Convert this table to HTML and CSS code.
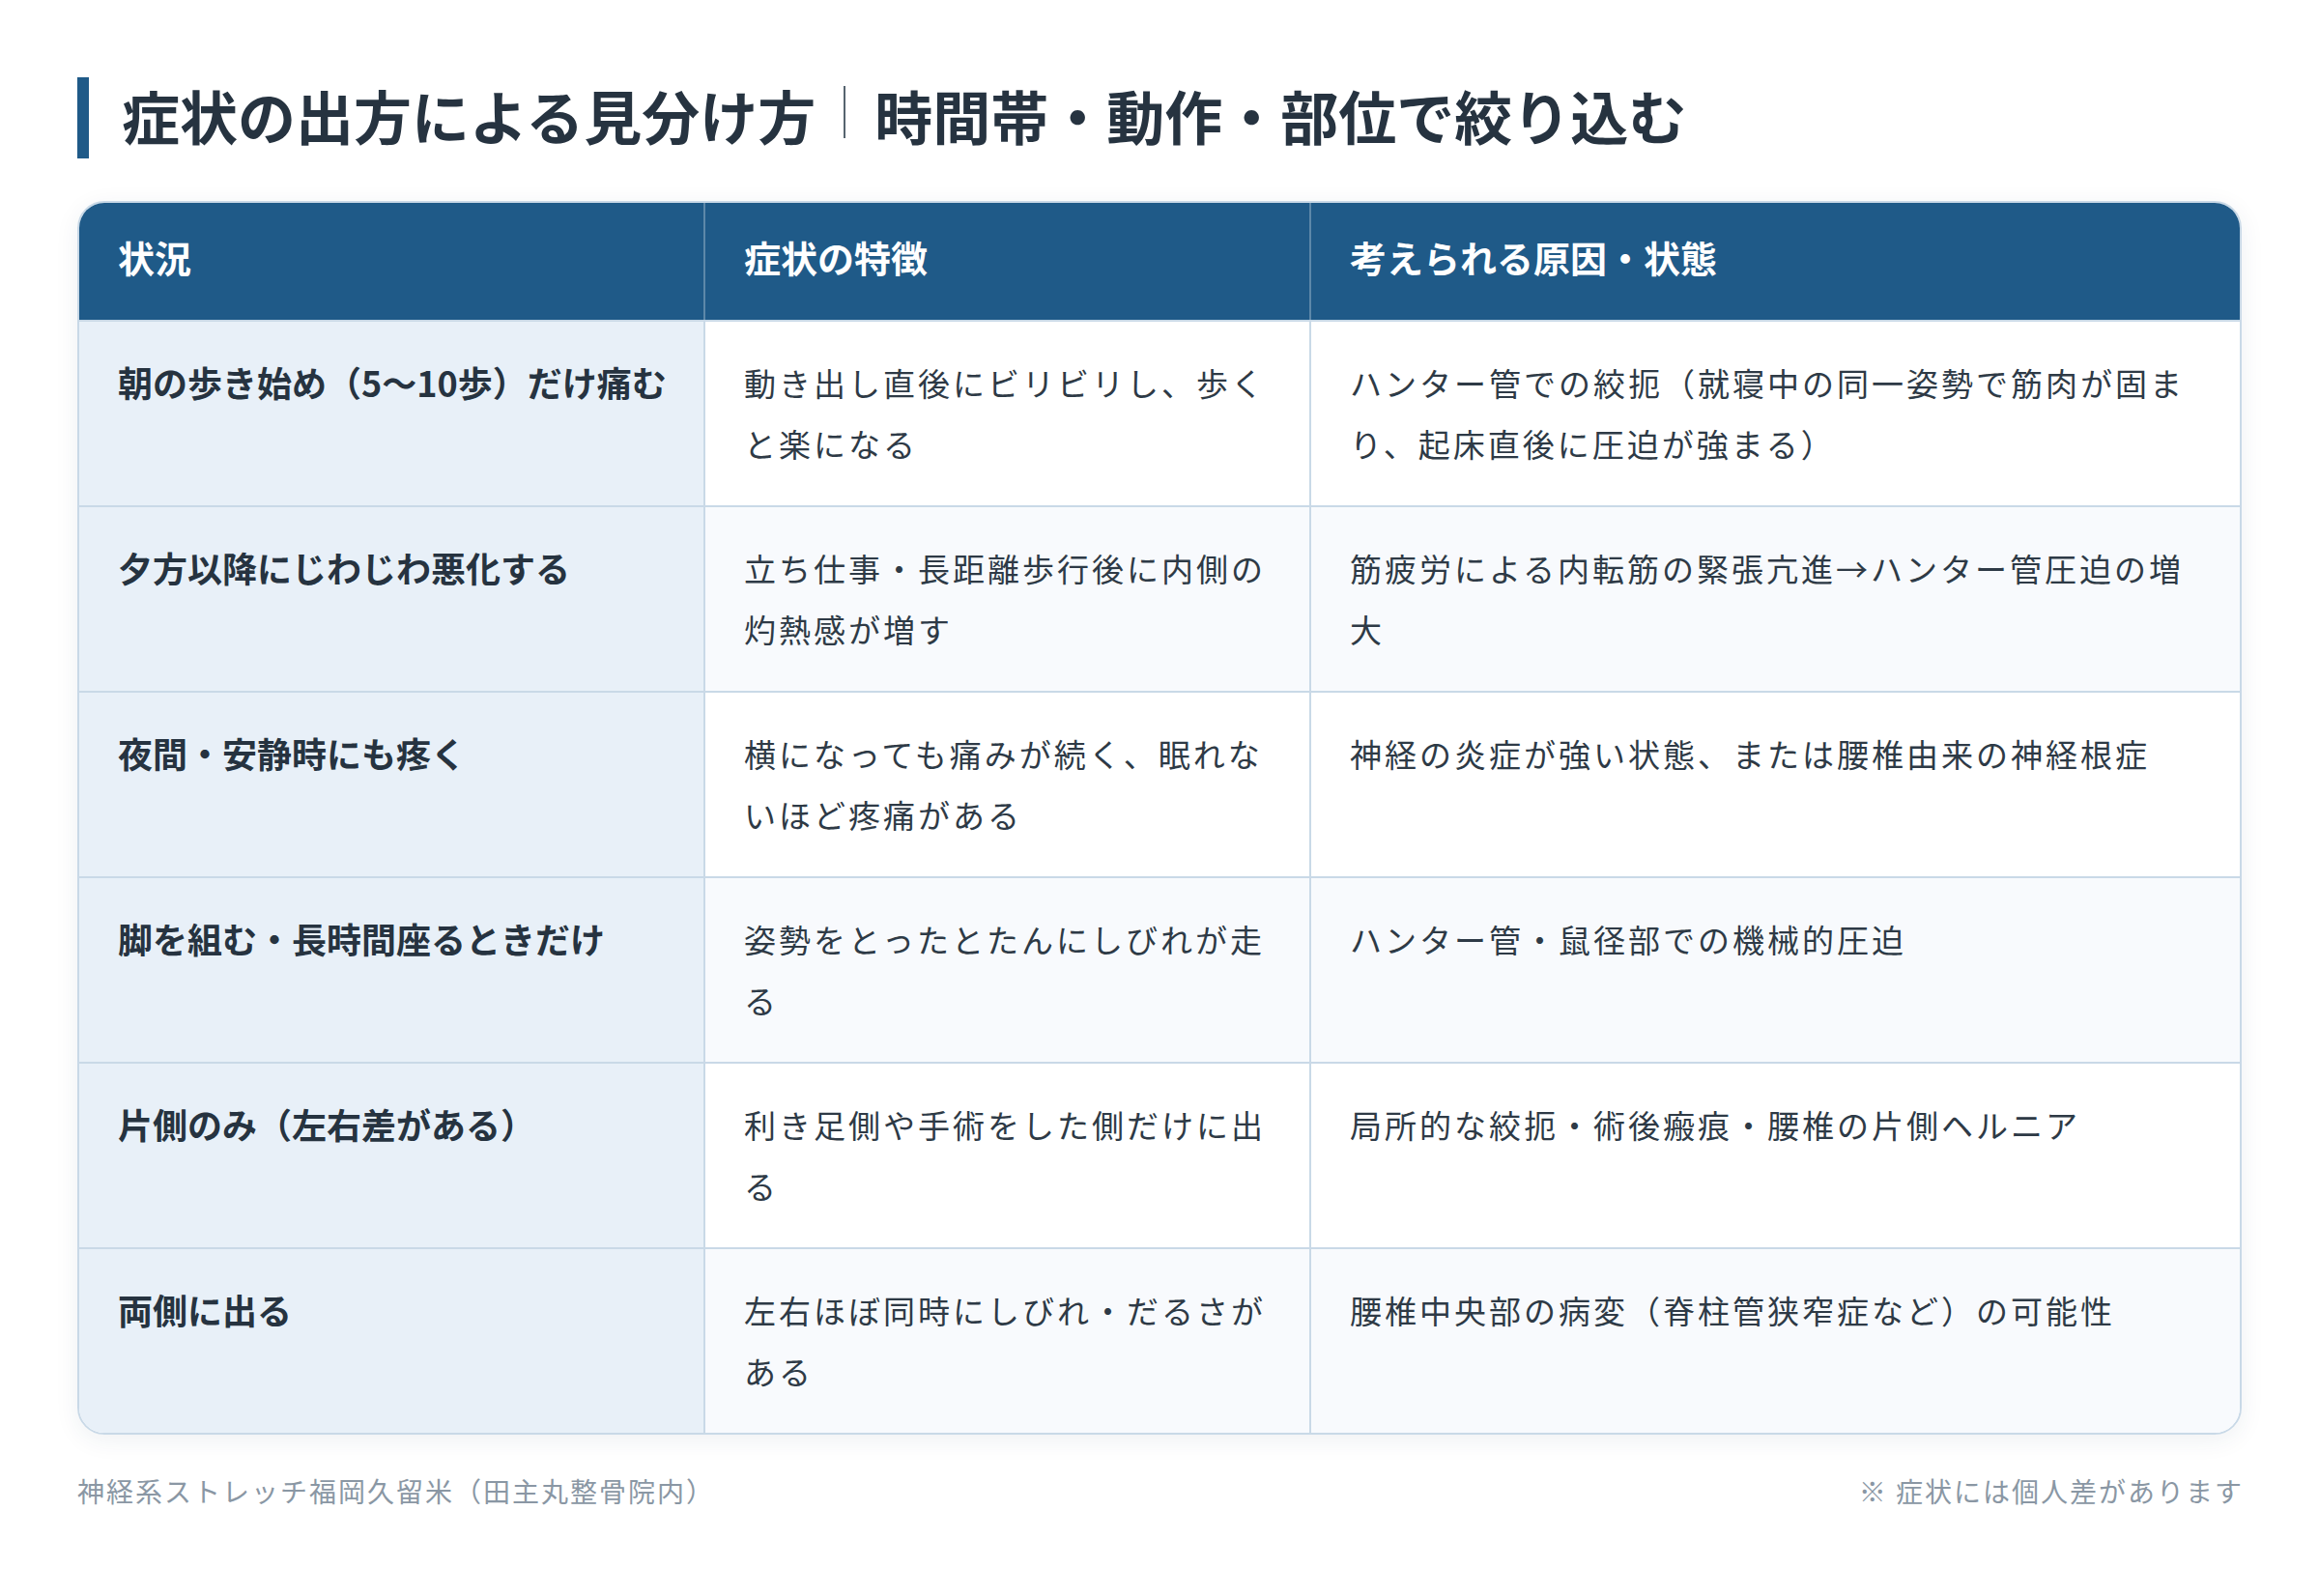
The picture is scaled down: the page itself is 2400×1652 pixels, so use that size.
FILE: index.html
```html
<!DOCTYPE html>
<html lang="ja">
<head>
<meta charset="utf-8">
<title>症状の出方による見分け方</title>
<link rel="stylesheet" href="styles.css">
</head>
<body>
<main class="page">
  <h1 class="title">症状の出方による見分け方<span class="sep"></span>時間帯・動作・部位で絞り込む</h1>
  <div class="card">
    <table class="grid">
      <colgroup>
        <col class="c1">
        <col class="c2">
        <col class="c3">
      </colgroup>
      <thead>
        <tr>
          <th>状況</th>
          <th>症状の特徴</th>
          <th>考えられる原因・状態</th>
        </tr>
      </thead>
      <tbody>
        <tr>
          <td class="sit">朝の歩き始め（5〜10歩）だけ痛む</td>
          <td>動き出し直後にビリビリし、歩くと楽になる</td>
          <td>ハンター管での絞扼（就寝中の同一姿勢で筋肉が固まり、起床直後に圧迫が強まる）</td>
        </tr>
        <tr>
          <td class="sit">夕方以降にじわじわ悪化する</td>
          <td>立ち仕事・長距離歩行後に内側の灼熱感が増す</td>
          <td>筋疲労による内転筋の緊張亢進→ハンター管圧迫の増大</td>
        </tr>
        <tr>
          <td class="sit">夜間・安静時にも疼く</td>
          <td>横になっても痛みが続く、眠れないほど疼痛がある</td>
          <td>神経の炎症が強い状態、または腰椎由来の神経根症</td>
        </tr>
        <tr>
          <td class="sit">脚を組む・長時間座るときだけ</td>
          <td>姿勢をとったとたんにしびれが走る</td>
          <td>ハンター管・鼠径部での機械的圧迫</td>
        </tr>
        <tr>
          <td class="sit">片側のみ（左右差がある）</td>
          <td>利き足側や手術をした側だけに出る</td>
          <td>局所的な絞扼・術後瘢痕・腰椎の片側ヘルニア</td>
        </tr>
        <tr>
          <td class="sit">両側に出る</td>
          <td>左右ほぼ同時にしびれ・だるさがある</td>
          <td>腰椎中央部の病変（脊柱管狭窄症など）の可能性</td>
        </tr>
      </tbody>
    </table>
  </div>
  <footer class="foot">
    <span>神経系ストレッチ福岡久留米（田主丸整骨院内）</span>
    <span>※ 症状には個人差があります</span>
  </footer>
</main>
</body>
</html>
```

FILE: styles.css
```css
html, body {
  margin: 0;
  padding: 0;
  background: #ffffff;
}

body {
  font-family: "Noto Sans CJK JP", "Noto Sans", sans-serif;
  color: #263340;
}

.page {
  padding: 80px 80px 0 80px;
}

.title {
  margin: 0;
  border-left: 12px solid #1f5a88;
  padding: 0 0 6px 34px;
  font-size: 60px;
  font-weight: 700;
  line-height: 78px;
  color: #263340;
  letter-spacing: 0;
  white-space: nowrap;
}

.sep {
  display: inline-block;
  width: 2px;
  height: 54px;
  background: #56646f;
  margin: 0 30px 0 29px;
  vertical-align: 2px;
}

.card {
  margin-top: 44px;
  border: 2px solid #c9d9e7;
  border-radius: 28px;
  overflow: hidden;
  box-shadow: 0 6px 26px rgba(30, 60, 90, 0.07);
}

.grid {
  width: 100%;
  border-collapse: separate;
  border-spacing: 0;
  table-layout: fixed;
}

.c1 { width: 646px; }
.c2 { width: 627px; }
.c3 { width: auto; }

.grid th {
  background: #1f5a88;
  color: #ffffff;
  text-align: left;
  font-size: 38px;
  font-weight: 700;
  line-height: 63px;
  padding: 24px 40px 34px 40px;
  height: 63px;
}

.grid th + th {
  border-left: 2px solid rgba(255, 255, 255, 0.28);
}

.grid td {
  vertical-align: top;
  padding: 32px 40px;
  height: 126px;
  font-size: 33px;
  line-height: 63px;
  letter-spacing: 3px;
  color: #2e3a46;
  border-top: 2px solid #c9d9e7;
  background: #ffffff;
}

.grid td + td {
  border-left: 2px solid #c9d9e7;
}

.grid tbody tr:nth-child(even) td {
  background: #f8fafd;
}

.grid td.sit,
.grid tbody tr:nth-child(even) td.sit {
  background: #e8f0f8;
  font-size: 36px;
  font-weight: 700;
  letter-spacing: 0;
  color: #263340;
  padding-right: 20px;
  padding-top: 31px;
}

.foot {
  display: flex;
  justify-content: space-between;
  margin-top: 37px;
  font-size: 28px;
  line-height: 42px;
  letter-spacing: 2px;
  color: #8a97a4;
}

.foot span:last-child {
  margin-right: -2px;
}
```
